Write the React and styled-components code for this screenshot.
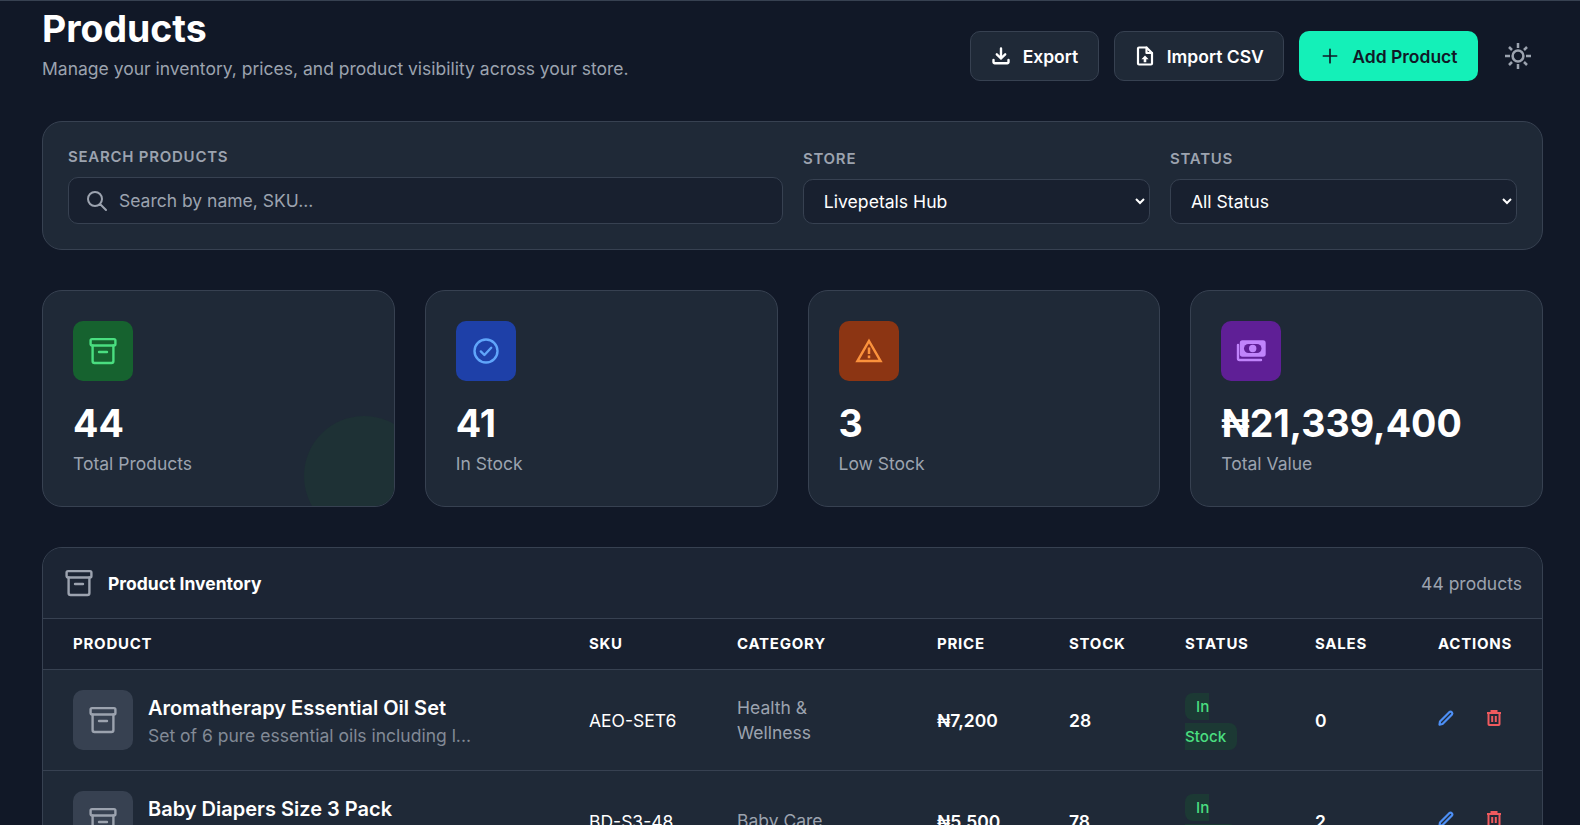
import React from 'react';
import styled, { createGlobalStyle } from 'styled-components';
import { HiOutlineSearch, HiOutlinePlus } from 'react-icons/hi';

const Global = createGlobalStyle`
  html, body { margin: 0; padding: 0; height: 825px; overflow: hidden; background: #111827; }
  body { font-family: Inter, "Noto Sans", sans-serif; color: #fff; }
  * { box-sizing: border-box; }
`;

const Page = styled.main`
  height: 825px;
  overflow: hidden;
  padding: 0 37px 0 42px;
  border-top: 1px solid #374151;
  background: #111827;
`;
const Header = styled.header`
  display: flex;
  justify-content: space-between;
  align-items: flex-start;
  height: 120px;
`;
const Title = styled.h1`
  margin: 6px 0 0;
  font-size: 37.4px;
  line-height: 44px;
  font-weight: 700;
`;
const Subtitle = styled.p`
  margin: 6px 0 0;
  font-size: 17.5px;
  line-height: 24px;
  color: #9ca3af;
`;
const Toolbar = styled.div`
  display: flex;
  align-items: center;
  margin-top: 30px;
  gap: 15px;
`;
const Button = styled.button`
  display: flex;
  align-items: center;
  gap: 12px;
  height: 50px;
  padding: 0 19.5px 0 20px;
  border-radius: 10px;
  border: 1px solid ${p => (p.$primary ? 'transparent' : '#374151')};
  background: ${p => (p.$primary ? '#14f0b8' : '#1f2937')};
  color: ${p => (p.$primary ? '#111827' : '#fff')};
  font: 600 17.5px Inter, sans-serif;
`;
const ThemeToggle = styled.button`
  display: flex;
  padding: 10px;
  border: 0;
  background: none;
  color: #9ca3af;
`;
const Filters = styled.section`
  display: flex;
  align-items: flex-end;
  gap: 20px;
  height: 129px;
  padding: 0 25px 25px;
  background: #1f2937;
  border: 1px solid #374151;
  border-radius: 20px;
`;
const Field = styled.label`
  display: flex;
  flex-direction: column;
  gap: 10px;
  flex: ${p => p.$grow || 1} 1 0;
  min-width: 0;
`;
const Label = styled.span`
  font-size: 15px;
  line-height: 20px;
  font-weight: 600;
  letter-spacing: 0.75px;
  color: #9ca3af;
`;
const SearchBox = styled.div`
  display: flex;
  align-items: center;
  gap: 10px;
  height: 47px;
  padding: 0 16px;
  background: #18202f;
  border: 1px solid #374151;
  border-radius: 10px;
  color: #9ca3af;
  font-size: 17.5px;
`;
const Select = styled.select`
  zoom: 1.1;
  height: 41px;
  width: 100%;
  padding: 0 14.5px;
  background: #18202f;
  border: 1px solid #374151;
  border-radius: 9px;
  color: #fff;
  font: 400 16px Inter, sans-serif;
`;
const Stats = styled.section`
  display: grid;
  grid-template-columns: repeat(4, 1fr);
  gap: 30px;
  margin-top: 40px;
`;
const StatCard = styled.article`
  position: relative;
  overflow: hidden;
  height: 217px;
  padding: 30px;
  background: #1f2937;
  border: 1px solid #374151;
  border-radius: 20px;
`;
const Blob = styled.span`
  position: absolute;
  right: -30px;
  bottom: -30px;
  width: 120px;
  height: 120px;
  border-radius: 50%;
  background: #1e3135;
`;
const StatIcon = styled.div`
  display: flex;
  align-items: center;
  justify-content: center;
  width: 60px;
  height: 60px;
  border-radius: 10px;
  background: ${p => p.$bg};
  color: ${p => p.$fg};
`;
const StatValue = styled.div`
  margin-top: 21px;
  font-size: 37.6px;
  line-height: 44px;
  font-weight: 700;
`;
const StatLabel = styled.div`
  margin-top: 5px;
  font-size: 17.5px;
  line-height: 26px;
  color: #9ca3af;
`;
const Inventory = styled.section`
  margin-top: 40px;
  background: #1f2937;
  border: 1px solid #374151;
  border-radius: 20px;
  overflow: hidden;
`;
const InventoryHead = styled.div`
  display: flex;
  align-items: center;
  justify-content: space-between;
  height: 71px;
  padding: 0 20px 0 21px;
  background: #1c2534;
  border-bottom: 1px solid #374151;
`;
const InventoryTitle = styled.h2`
  display: flex;
  align-items: center;
  gap: 14px;
  margin: 0;
  font-size: 17.5px;
  font-weight: 700;
  color: #fff;
  svg { color: #9ca3af; }
`;
const Count = styled.span`
  font-size: 17.5px;
  color: #9ca3af;
`;
const Table = styled.table`
  width: 100%;
  table-layout: fixed;
  border-collapse: collapse;
`;
const Th = styled.th`
  height: 50px;
  padding: 0 0 0 30px;
  background: #18202f;
  border-bottom: 1px solid #374151;
  text-align: left;
  font-size: 15px;
  font-weight: 700;
  letter-spacing: 0.75px;
  color: #fff;
`;
const Td = styled.td`
  height: 101px;
  padding: ${p => p.$top ?? 2}px 30px 0;
  border-bottom: 1px solid #374151;
  font-size: 17.5px;
  font-weight: ${p => (p.$strong ? 600 : 400)};
  color: ${p => (p.$muted ? '#9ca3af' : '#fff')};
  line-height: 25px;
`;
const ProductCell = styled.div`
  display: flex;
  align-items: center;
  gap: 15px;
  margin-top: -2px;
`;
const Thumb = styled.div`
  flex: none;
  display: flex;
  align-items: center;
  justify-content: center;
  width: 60px;
  height: 60px;
  border-radius: 10px;
  background: #374151;
  color: #9ca3af;
`;
const ProductText = styled.div`
  padding-top: 3px;
`;
const ProductName = styled.div`
  font-size: 20px;
  line-height: 28px;
  font-weight: 600;
`;
const ProductDesc = styled.div`
  margin-top: 1px;
  font-size: 17.5px;
  line-height: 26px;
  color: #828a96;
`;
const Badge = styled.span`
  padding: 4px 11px;
  border-radius: 8px;
  background: #1c3934;
  color: #4ade80;
  font-size: 15.2px;
  font-weight: 500;
  line-height: 30px;
`;
const Actions = styled.div`
  display: flex;
  gap: 29.5px;
  margin-left: -1px;
  padding-bottom: 6px;
`;
const ActionButton = styled.button`
  display: flex;
  padding: 0;
  border: 0;
  background: none;
  color: ${p => p.$color};
`;

const Svg = styled.svg.attrs(p => ({
  viewBox: `0 0 ${p.$size || 30} ${p.$size || 30}`,
  width: p.$size || 30,
  height: p.$size || 30,
  fill: 'none',
  stroke: 'currentColor',
  strokeWidth: p.$stroke || 2.4,
  strokeLinecap: p.$cap || 'round',
  strokeLinejoin: p.$join || 'round',
}))`
  flex: none;
`;

const ArchiveIcon = () => (
  <Svg>
    <rect x="2.600" y="3.100" width="24.800" height="6.400" rx="1.400" />
    <path d="M4.600 9.500V25a2 2 0 0 0 2 2h16.800a2 2 0 0 0 2-2V9.500" />
    <path d="M11 16h8" />
  </Svg>
);
const CheckIcon = () => (
  <Svg>
    <circle cx="15" cy="15" r="11.500" />
    <path d="M9.800 15.400l3.600 3.600 6.800-7.200" />
  </Svg>
);
const WarningIcon = () => (
  <Svg $join="miter" $cap="butt" $stroke={2.5}>
    <path d="M15 5L26.500 25h-23z" />
    <path d="M15 11.500v6.500M15 19.600v2.600" />
  </Svg>
);
const CashIcon = () => (
  <Svg>
    <rect x="5" y="5.500" width="23.500" height="14" rx="1.500" fill="#c084fc" stroke="#c084fc" />
    <rect x="8" y="8" width="17.500" height="9" rx="4.500" fill="#5f1f96" stroke="none" />
    <circle cx="16.700" cy="12.500" r="3.700" fill="#c084fc" stroke="none" />
    <path d="M2 9v13.500A1.500 1.500 0 0 0 3.500 24H25" />
  </Svg>
);
const SunIcon = () => (
  <Svg $stroke={2.5} $cap="butt">
    <circle cx="15" cy="15" r="5.400" />
    <path d="M15 2v5M15 23v5M2 15h5M23 15h5M6 6l3 3M21 21l3 3M6 24l3-3M21 9l3-3" />
  </Svg>
);
const ExportIcon = () => (
  <Svg $size={20}>
    <path d="M10 2.500v10M5.800 8.300l4.200 4.200 4.200-4.200" />
    <path d="M2.500 14V16a1.200 1.200 0 0 0 1.200 1.200h12.600a1.200 1.200 0 0 0 1.200-1.200v-2" />
  </Svg>
);
const ImportIcon = () => (
  <Svg $size={20} $stroke={2.2}>
    <path d="M3 2.500a1 1 0 0 1 1-1h7.500L17 7v10.500a1 1 0 0 1-1 1H4a1 1 0 0 1-1-1z" />
    <path d="M11.500 1.500V7H17" />
    <path d="M10 9.500l-3.600 3.800h2.300v3h2.600v-3h2.300z" fill="currentColor" stroke="none" />
  </Svg>
);
const PencilIcon = () => (
  <Svg $size={18} $stroke={2.2}>
    <path d="M3 12.500L12.500 3a1.800 1.800 0 0 1 2.500 2.500L5.500 15l-3 .6z" />
  </Svg>
);
const TrashIcon = () => (
  <Svg $size={18} $stroke={2} $cap="butt" $join="miter">
    <path d="M2 4h14M6.500 4V2h5v2" />
    <path d="M3.500 4v11.200a.8.8 0 0 0 .8.8h9.400a.8.8 0 0 0 .8-.8V4" />
    <path d="M7.200 7v6M10.800 7v6" />
  </Svg>
);

const rows = [
  { name: 'Aromatherapy Essential Oil Set', desc: 'Set of 6 pure essential oils including l...', sku: 'AEO-SET6', cat: 'Health & Wellness', price: '₦7,200', stock: 28, sales: 0 },
  { name: 'Baby Diapers Size 3 Pack', desc: 'Ultra-soft diapers with 12-hour protecti...', sku: 'BD-S3-48', cat: 'Baby Care', price: '₦5,500', stock: 78, sales: 2 },
];
const cols = [516, 148, 200, 132, 116, 130, 123, 135];
const heads = ['PRODUCT', 'SKU', 'CATEGORY', 'PRICE', 'STOCK', 'STATUS', 'SALES', 'ACTIONS'];
const stats = [
  { v: '44', l: 'Total Products', bg: '#16622f', fg: '#4ade80', I: ArchiveIcon, blob: true },
  { v: '41', l: 'In Stock', bg: '#1e40a8', fg: '#60a5fa', I: CheckIcon },
  { v: '3', l: 'Low Stock', bg: '#8c3513', fg: '#fb923c', I: WarningIcon },
  { v: '₦21,339,400', l: 'Total Value', bg: '#5f1f96', fg: '#c084fc', I: CashIcon },
];

export default function App() {
  return (
    <Page>
      <Global />
      <Header>
        <div>
          <Title>Products</Title>
          <Subtitle>Manage your inventory, prices, and product visibility across your store.</Subtitle>
        </div>
        <Toolbar>
          <Button><ExportIcon />Export</Button>
          <Button><ImportIcon />Import CSV</Button>
          <Button $primary><HiOutlinePlus size={20} />Add Product</Button>
          <ThemeToggle aria-label="Theme"><SunIcon /></ThemeToggle>
        </Toolbar>
      </Header>
      <Filters>
        <Field $grow={2.06}>
          <Label>SEARCH PRODUCTS</Label>
          <SearchBox><HiOutlineSearch size={24} />Search by name, SKU...</SearchBox>
        </Field>
        <Field>
          <Label>STORE</Label>
          <Select defaultValue="Livepetals Hub"><option>Livepetals Hub</option></Select>
        </Field>
        <Field>
          <Label>STATUS</Label>
          <Select defaultValue="All Status"><option>All Status</option></Select>
        </Field>
      </Filters>
      <Stats>
        {stats.map(({ v, l, bg, fg, I, blob }) => (
          <StatCard key={l}>
            {blob && <Blob />}
            <StatIcon $bg={bg} $fg={fg}><I /></StatIcon>
            <StatValue>{v}</StatValue>
            <StatLabel>{l}</StatLabel>
          </StatCard>
        ))}
      </Stats>
      <Inventory>
        <InventoryHead>
          <InventoryTitle><ArchiveIcon />Product Inventory</InventoryTitle>
          <Count>44 products</Count>
        </InventoryHead>
        <Table>
          <colgroup>{cols.map((w, i) => <col key={i} width={w} />)}</colgroup>
          <thead><tr>{heads.map(h => <Th key={h}>{h}</Th>)}</tr></thead>
          <tbody>
            {rows.map(r => (
              <tr key={r.sku}>
                <Td>
                  <ProductCell>
                    <Thumb><ArchiveIcon /></Thumb>
                    <ProductText>
                      <ProductName>{r.name}</ProductName>
                      <ProductDesc>{r.desc}</ProductDesc>
                    </ProductText>
                  </ProductCell>
                </Td>
                <Td>{r.sku}</Td>
                <Td $muted $top={0}>{r.cat}</Td>
                <Td $strong>{r.price}</Td>
                <Td $strong>{r.stock}</Td>
                <Td $top={4}><Badge>In Stock</Badge></Td>
                <Td $strong>{r.sales}</Td>
                <Td>
                  <Actions>
                    <ActionButton $color="#4d8ff5"><PencilIcon /></ActionButton>
                    <ActionButton $color="#f05a5e"><TrashIcon /></ActionButton>
                  </Actions>
                </Td>
              </tr>
            ))}
          </tbody>
        </Table>
      </Inventory>
    </Page>
  );
}
